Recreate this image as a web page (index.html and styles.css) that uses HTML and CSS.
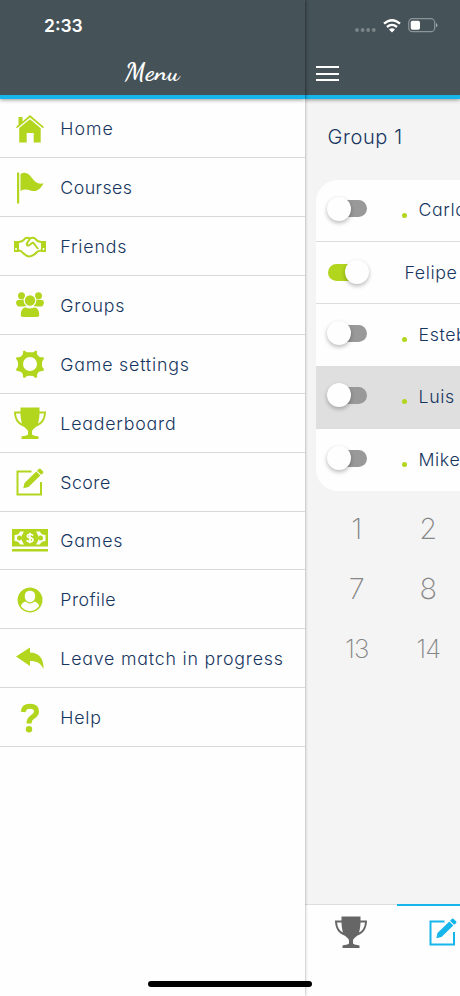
FILE: index.html
```html
<!DOCTYPE html>
<html lang="en">
<head>
<meta charset="utf-8">
<title>Menu</title>
<link rel="stylesheet" href="styles.css">
</head>
<body>
<svg class="defs" aria-hidden="true">
  <symbol id="trophy" viewBox="0 0 32 32"><path fill-rule="evenodd" d="M6.500.5h19v4H32c0 7-3 13-9.500 15-2 2-4.500 3-4.500 5v3c1 1.500 4 1.200 6.500 2V32h-17v-2.500c2.500-.8 5.500-.5 6.500-2v-3c0-2-2.500-3-4.500-5C3 17.500 0 11.500 0 4.500h6.500zM2 6.500c.4 5 2.500 8.500 6 10C7 13 6.600 10 6.500 6.500zM30 6.500h-4.500c-.1 3.500-.5 6.500-1.500 10 3.500-1.500 5.600-5 6-10z"/></symbol>
  <symbol id="edit" viewBox="0 0 28 28"><path d="M15.500 3.500h-14v23H25V14" fill="none" stroke="currentColor" stroke-width="2"/><path d="M7.300 20.300l1.200-5.300L20.300 3.400l4 4L12.500 19zM21 2.700L22.700 1q1-1 2 0L27 3.300q1 1 0 2L25.100 6.800z"/></symbol>
</svg>
<div class="screen">
  <aside class="drawer">
    <header class="bar drawer-bar"><time>2:33</time><h1>Menu</h1></header>
    <nav>
      <a class="item"><span class="icon"><svg width="28" height="28" viewBox="0 0 28 28"><path d="M14 0l14 12-1 1.200L14 2.500 1 13.200 0 12l2.500-2.200V2h4v4.400z"/><path d="M14 4.300l10.700 9V27.500h-7V18h-7v9.500h-7.500V13z"/></svg></span><span class="wide">Home</span></a>
      <a class="item"><span class="icon"><svg width="28" height="32" viewBox="0 0 28 32"><path d="M1 .5h2.200v31H1zM4.500 2c5-3 8.500-.5 11.500 4 3.500 5 7 6.500 11.500 5.200-3.500 7-8 9-13 7.300-4-1.400-7-1.200-10 .5z"/></svg></span><span class="tight">Courses</span></a>
      <a class="item"><span class="icon"><svg width="32" height="22" viewBox="0 0 32 22"><path fill-rule="evenodd" d="M0 5h5v11H0zm2 7a1 1 0 1 0 .1 0zM27 5h5v11h-5zm2.500 7a1 1 0 1 0 .1 0z"/><path d="M5 6q4-.5 6-3.500 2-1.500 5 0 3-1.500 5 0 2 3 6 3.500M5 14.500q2 0 4 2.500 4 4 7.500 3.300 3.500-.8 6.500-4.300 2-1.500 4-1.500M16 2.500l-3.300 5.200q0 2 2 1.800L19 6.500l5.200 6.500" class="line"/></svg></span><span>Friends</span></a>
      <a class="item"><span class="icon"><svg width="28" height="26" viewBox="0 0 28 26"><circle cx="5.500" cy="3.700" r="3.500"/><circle cx="22.500" cy="3.700" r="3.500"/><path d="M2 8q7-1 8 0v6.500H2.500q-2-.5-2.500-4Q0 8.500 2 8zM26 8q-7-1-8 0v6.500h7.500q2-.5 2.500-4 0-2-2-2.500z"/><circle cx="14" cy="8.500" r="5.800" class="cut"/><path d="M9 14.800q5 2 10 0 5 1.700 4.900 8.700-.2 2-3 2H7.100q-2.800 0-3-2Q4 16.500 9 14.800z" class="cut"/></svg></span><span>Groups</span></a>
      <a class="item"><span class="icon"><svg width="28" height="28" viewBox="0 0 28 28"><path d="M8.500.5q2.500 3 5.500 2.200Q17 3.500 19.500.5l1.500.7q-.5 4 1.500 5.200 2 1.200 5.100.8l.4 1.500q-2.500 2.500-2.200 5.300-.2 3 2.200 5.300l-.7 1.700q-4-.3-5.300 1.500-1.200 1.700-.8 4.800l-1.700.7Q17 25.200 14 25.300 11 25.200 8.500 28L7 27.300q.3-3.500-1.200-4.800Q4 20.700.7 21L0 19.300Q2.500 17 2.200 14 2.500 11.200 0 8.700l.6-1.500q3.500.4 5.200-1Q7.500 5 7 1.200z"/><circle cx="14" cy="14" r="11.700"/><circle cx="14" cy="14" r="7" class="hole"/></svg></span><span>Game settings</span></a>
      <a class="item"><span class="icon"><svg width="32" height="32"><use href="#trophy"/></svg></span><span>Leaderboard</span></a>
      <a class="item"><span class="icon"><svg width="28" height="28"><use href="#edit"/></svg></span><span class="tight">Score</span></a>
      <a class="item"><span class="icon"><svg width="36" height="23" viewBox="0 0 36 23"><path fill-rule="evenodd" d="M0 0h36v17.500H0zM8 2.500q-1 3.500-5.500 3.500v6q4.500 0 5.500 3.500h4q-5-6.500 0-13zM28 2.500q1 3.500 5.500 3.500v6q-4.500 0-5.500 3.500h-4q5-6.500 0-13zM0 20h36v2.500H0z"/><circle cx="7.500" cy="9" r="2.500"/><circle cx="28.500" cy="9" r="2.500"/><path class="dollar" d="M21 6.800q-.5-1.500-3-1.500-2.600 0-2.600 1.700 0 1.500 2.600 1.800 3 .3 3 2.100 0 1.900-3 1.900-2.800 0-3.100-1.800M18 3.800v10.500"/></svg></span><span>Games</span></a>
      <a class="item"><span class="icon"><svg width="26" height="26" viewBox="0 0 26 26"><path fill-rule="evenodd" d="M13 .5a12.500 12.500 0 1 0 .1 0zM13 3.800c-3.500 0-5.200 2.200-5.200 5.500 0 3.500 2.300 6 5.200 6s5.200-2.500 5.200-6c0-3.300-1.700-5.500-5.200-5.500zM8.500 14.500q-4 1-4.500 4.700 3.500 4.800 9 4.800t9-4.800q-.5-3.700-4.500-4.700-4.500 4.200-9 0z"/></svg></span><span class="tight">Profile</span></a>
      <a class="item"><span class="icon"><svg width="28" height="24" viewBox="0 0 28 24"><path d="M0 9.500L14 .5v5c8 0 14 5 13.500 16.500-3-6-6.500-8-13.500-8v5z"/></svg></span><span>Leave match in progress</span></a>
      <a class="item"><span class="icon"><svg width="20" height="30" viewBox="0 0 20 30"><path d="M3.200 9Q3.500 3.200 10 3.200q6.500 0 6.500 5.300 0 3-4 5.500-3.500 2.200-3.500 6.500" fill="none" stroke="currentColor" stroke-width="5"/><circle cx="9" cy="26.300" r="3.200"/></svg></span><span>Help</span></a>
    </nav>
  </aside>
  <main class="page">
    <header class="bar page-bar">
      <div class="status">
        <svg width="21" height="4" viewBox="0 0 21 4" class="dim"><circle cx="2" cy="2" r="1.900"/><circle cx="7.600" cy="2" r="1.900"/><circle cx="13.200" cy="2" r="1.900"/><circle cx="18.800" cy="2" r="1.900"/></svg>
        <svg width="18" height="14" viewBox="0 0 18 14" class="wifi"><path d="M1 4.700q8-7 16 0M4 8q5-4.200 10 0"/><path d="M6 10.500q3-2.400 6 0l-3 3z" class="solid"/></svg>
        <svg width="30" height="15" viewBox="0 0 30 15"><rect x=".7" y=".7" width="26" height="13" rx="3.800" class="battery"/><rect x="2.700" y="2.700" width="9.300" height="9" rx="1.700"/><path d="M28 5q3 2.200 0 4.500z" opacity=".5"/></svg>
      </div>
      <div class="burger"><i></i><i></i><i></i></div>
    </header>
    <h2>Group 1</h2>
    <section class="players">
      <div class="player"><span class="switch"></span><b class="dot"></b><span class="name">Carlo</span></div>
      <div class="player"><span class="switch on"></span><span class="name">Felipe</span></div>
      <div class="player"><span class="switch"></span><b class="dot"></b><span class="name">Esteb</span></div>
      <div class="player selected"><span class="switch"></span><b class="dot"></b><span class="name">Luis</span></div>
      <div class="player"><span class="switch"></span><b class="dot"></b><span class="name">Mike</span></div>
    </section>
    <section class="holes"><span>1</span><span>2</span><span>7</span><span>8</span><span class="two">13</span><span class="two">14</span></section>
    <footer class="tabs"><div class="tab"><svg width="32" height="32"><use href="#trophy"/></svg></div><div class="tab active"><svg width="28" height="28"><use href="#edit"/></svg></div></footer>
  </main>
  <div class="home-indicator"></div>
</div>
</body>
</html>
```

FILE: styles.css
```css
* { box-sizing: border-box; }
body { margin: 0; font-family: Inter, "Open Sans", sans-serif; font-weight: 300; font-feature-settings: "cv11"; color: #17365f; }
svg { display: block; fill: currentColor; overflow: visible; flex: none; }
.defs { position: absolute; width: 0; height: 0; }
.screen { position: relative; display: grid; grid-template-columns: 305px 155px; width: 460px; height: 996px; overflow: hidden; background: #f4f4f4; }
.drawer { position: relative; z-index: 2; background: #fefefe; box-shadow: 0 0 3px rgba(0,0,0,.38); }
.bar { position: relative; z-index: 1; height: 98.600px; background: #455257; border-bottom: 4px solid #16b5ec; color: #fff; box-shadow: 0 1px 4px rgba(0,0,0,.4); }
.drawer-bar { display: flex; flex-direction: column; }
time { padding: 14.500px 0 0 44px; font: 600 17.500px/22px Inter, sans-serif; letter-spacing: 0; }
h1 { margin: 22px 0 0; font: 700 26px/26px "Dancing Script", cursive; text-align: center; letter-spacing: .6px; }
nav { padding-top: .7px; }
.item { display: flex; align-items: center; height: 58.900px; border-bottom: 1px solid #d9d9d9; font-size: 17.800px; letter-spacing: .8px; white-space: nowrap; padding-top: 1px; }
.wide { letter-spacing: 1px; }
.tight { letter-spacing: .45px; }
.icon { width: 60.300px; display: flex; justify-content: center; color: #b2d51d; }
.line { fill: none; stroke: currentColor; stroke-width: 2; stroke-linejoin: round; }
.cut { stroke: #fefefe; stroke-width: 1.200; }
.hole { fill: #fefefe; }
.dollar { fill: none; stroke: #fff; stroke-width: 1.600; }
.page { display: flex; flex-direction: column; min-width: 0; }
.page-bar { flex: none; }
.status { display: flex; align-items: center; gap: 7px; padding: 18px 0 0 49.500px; height: 33px; }
.dim { color: #7b8589; margin-top: 9px; }
.wifi { fill: none; stroke: #fff; stroke-width: 2.300; }
.solid { fill: #fff; stroke: none; }
.battery { fill: none; stroke: #8c9599; stroke-width: 1.200; }
.burger { display: grid; gap: 4.500px; margin: 33px 0 0 11px; width: 23px; }
.burger i { height: 2px; background: #fff; }
h2 { margin: 23.200px 0 0 22.500px; font-size: 20px; line-height: 30px; font-weight: 300; letter-spacing: .6px; }
.players { flex: none; margin: 28.200px 0 0 11px; background: #fefefe; border-radius: 22px 0 0 22px; overflow: hidden; }
.player { display: flex; align-items: center; height: 62.200px; border-bottom: 1px solid #ddd; padding: 0 0 1.500px 12px; white-space: nowrap; }
.player:last-child { border: 0; }
.player.selected { background: #dfdfdf; }
.switch { position: relative; flex: none; width: 39px; height: 17px; border-radius: 9px; background: #999; margin-right: 35px; }
.switch:not(.on) { margin-top: -2px; }
.switch::before { content: ""; position: absolute; left: -1px; top: -3.500px; width: 24px; height: 24px; border-radius: 50%; background: #fefefe; box-shadow: 0 2px 4px rgba(0,0,0,.28); }
.switch.on { background: #b2d51d; margin-right: 37.500px; }
.switch.on::before { left: 17px; }
.dot { flex: none; width: 5px; height: 5px; border-radius: 50%; background: #b2d51d; margin: 11px 11.500px 0 0; }
.name { font-size: 17.800px; letter-spacing: .6px; }
.holes { display: grid; grid-template-columns: 71.500px 71.500px; grid-auto-rows: 60px; margin: 8px 0 0 16px; color: #878787; font-weight: 200; font-size: 29px; text-align: center; line-height: 60px; }
.two { font-size: 26px; letter-spacing: -.8px; }
.tabs { display: grid; grid-template-columns: 92px 92px; height: 92px; margin-top: auto; background: #fefefe; border-top: 1px solid #ddd; }
.tab { padding: 11px 0 0 30px; color: #666; }
.tab.active { margin-top: -1px; border-top: 2.500px solid #16b5ec; color: #16b5ec; padding: 12px 0 0 31.500px; }
.home-indicator { position: absolute; z-index: 3; left: 148px; top: 981px; width: 164px; height: 5.500px; border-radius: 3px; background: #000; }
```
